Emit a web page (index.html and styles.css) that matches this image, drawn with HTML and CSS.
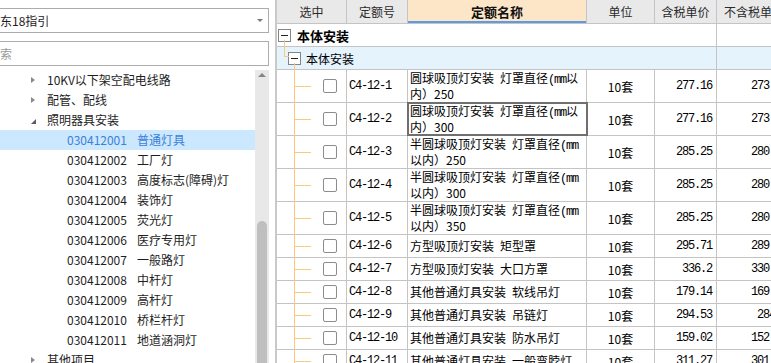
FILE: index.html
```html
<!DOCTYPE html>
<html lang="zh-CN">
<head>
  <meta charset="UTF-8">
  <title>定额库</title>
  <link rel="stylesheet" href="styles.css">
</head>
<body>
  <div class="app">
    <aside class="side">
      <div class="combo"><span class="combo-text">广东18指引</span><span class="combo-arrow"></span></div>
      <div class="search"><span class="placeholder">搜索</span></div>
      <div class="tree-wrap">
        <ul class="tree">
          <li class="l1"><i class="tw closed"></i>10KV以下架空配电线路</li>
          <li class="l1"><i class="tw closed"></i>配管、配线</li>
          <li class="l1"><i class="tw open"></i>照明器具安装</li>
          <li class="l2 sel"><span class="code">030412001</span>普通灯具</li>
          <li class="l2"><span class="code">030412002</span>工厂灯</li>
          <li class="l2"><span class="code">030412003</span>高度标志(障碍)灯</li>
          <li class="l2"><span class="code">030412004</span>装饰灯</li>
          <li class="l2"><span class="code">030412005</span>荧光灯</li>
          <li class="l2"><span class="code">030412006</span>医疗专用灯</li>
          <li class="l2"><span class="code">030412007</span>一般路灯</li>
          <li class="l2"><span class="code">030412008</span>中杆灯</li>
          <li class="l2"><span class="code">030412009</span>高杆灯</li>
          <li class="l2"><span class="code">030412010</span>桥栏杆灯</li>
          <li class="l2"><span class="code">030412011</span>地道涵洞灯</li>
          <li class="l1"><i class="tw closed"></i>其他项目</li>
        </ul>
        <div class="vscroll"><span class="up"></span><span class="thumb"></span></div>
      </div>
    </aside>
    <div class="split"></div>
    <main class="grid">
      <div class="row head">
        <div class="c w1">选中</div>
        <div class="c w2">定额号</div>
        <div class="c w3 sorted">定额名称</div>
        <div class="c w4">单位</div>
        <div class="c w5">含税单价</div>
        <div class="c w6">不含税单价</div>
      </div>
      <div class="row group g1">
        <div class="c gcell"><span class="tbox"></span><b>本体安装</b></div>
        <div class="c w6"></div>
      </div>
      <div class="row group g2">
        <div class="c gcell"><span class="tbox"></span>本体安装</div>
        <div class="c w6"></div>
      </div>

      <div class="row tall">
        <div class="c w1 pick"><span class="chk"></span></div>
        <div class="c w2 mono">C4-12-1</div>
        <div class="c w3 name"><span>圆球吸顶灯安装&ensp;灯罩直径<span class="half">(mm</span>以<br>内）250</span></div>
        <div class="c w4 unit">10套</div>
        <div class="c w5 num">277.16</div>
        <div class="c w6 num">273.08</div>
      </div>
      <div class="row tall">
        <div class="c w1 pick"><span class="chk"></span></div>
        <div class="c w2 mono">C4-12-2</div>
        <div class="c w3 name current"><span>圆球吸顶灯安装&ensp;灯罩直径<span class="half">(mm</span>以<br>内）300</span></div>
        <div class="c w4 unit">10套</div>
        <div class="c w5 num">277.16</div>
        <div class="c w6 num">273.08</div>
      </div>
      <div class="row tall">
        <div class="c w1 pick"><span class="chk"></span></div>
        <div class="c w2 mono">C4-12-3</div>
        <div class="c w3 name"><span>半圆球吸顶灯安装&ensp;灯罩直径<span class="half">(mm</span><br>以内）250</span></div>
        <div class="c w4 unit">10套</div>
        <div class="c w5 num">285.25</div>
        <div class="c w6 num">280.53</div>
      </div>
      <div class="row tall">
        <div class="c w1 pick"><span class="chk"></span></div>
        <div class="c w2 mono">C4-12-4</div>
        <div class="c w3 name"><span>半圆球吸顶灯安装&ensp;灯罩直径<span class="half">(mm</span><br>以内）300</span></div>
        <div class="c w4 unit">10套</div>
        <div class="c w5 num">285.25</div>
        <div class="c w6 num">280.53</div>
      </div>
      <div class="row tall">
        <div class="c w1 pick"><span class="chk"></span></div>
        <div class="c w2 mono">C4-12-5</div>
        <div class="c w3 name"><span>半圆球吸顶灯安装&ensp;灯罩直径<span class="half">(mm</span><br>以内）350</span></div>
        <div class="c w4 unit">10套</div>
        <div class="c w5 num">285.25</div>
        <div class="c w6 num">280.53</div>
      </div>
      <div class="row">
        <div class="c w1 pick"><span class="chk"></span></div>
        <div class="c w2 mono">C4-12-6</div>
        <div class="c w3 name"><span>方型吸顶灯安装&ensp;矩型罩</span></div>
        <div class="c w4 unit">10套</div>
        <div class="c w5 num">295.71</div>
        <div class="c w6 num">289.62</div>
      </div>
      <div class="row">
        <div class="c w1 pick"><span class="chk"></span></div>
        <div class="c w2 mono">C4-12-7</div>
        <div class="c w3 name"><span>方型吸顶灯安装&ensp;大口方罩</span></div>
        <div class="c w4 unit">10套</div>
        <div class="c w5 num">336.2</div>
        <div class="c w6 num">330.11</div>
      </div>
      <div class="row">
        <div class="c w1 pick"><span class="chk"></span></div>
        <div class="c w2 mono">C4-12-8</div>
        <div class="c w3 name"><span>其他普通灯具安装&ensp;软线吊灯</span></div>
        <div class="c w4 unit">10套</div>
        <div class="c w5 num">179.14</div>
        <div class="c w6 num">169.87</div>
      </div>
      <div class="row">
        <div class="c w1 pick"><span class="chk"></span></div>
        <div class="c w2 mono">C4-12-9</div>
        <div class="c w3 name"><span>其他普通灯具安装&ensp;吊链灯</span></div>
        <div class="c w4 unit">10套</div>
        <div class="c w5 num">294.53</div>
        <div class="c w6 num">284.6</div>
      </div>
      <div class="row">
        <div class="c w1 pick"><span class="chk"></span></div>
        <div class="c w2 mono">C4-12-10</div>
        <div class="c w3 name"><span>其他普通灯具安装&ensp;防水吊灯</span></div>
        <div class="c w4 unit">10套</div>
        <div class="c w5 num">159.02</div>
        <div class="c w6 num">152.49</div>
      </div>
      <div class="row">
        <div class="c w1 pick"><span class="chk"></span></div>
        <div class="c w2 mono">C4-12-11</div>
        <div class="c w3 name"><span>其他普通灯具安装&ensp;一般弯脖灯</span></div>
        <div class="c w4 unit">10套</div>
        <div class="c w5 num">311.27</div>
        <div class="c w6 num">301.96</div>
      </div>
    </main>
  </div>
</body>
</html>
```

FILE: styles.css
```css
body { margin: 0; width: 771px; height: 363px; overflow: hidden; background: #fff; color: #1e1e1e; font-family: "Noto Sans CJK SC", sans-serif; font-size: 12px; }
.app { display: flex; height: 363px; }

/* left panel */
.side { width: 275px; flex: none; overflow: hidden; }
.combo, .search { box-sizing: border-box; width: 283px; height: 25px; margin: 8px 0 0 -14px; padding-left: 1px; border: 1px solid #acacac; display: flex; align-items: center; white-space: nowrap; }
.combo-text { flex: 1; }
.combo-arrow { width: 0; height: 0; margin-right: 5px; border-top: 3px solid #7a7a7a; border-left: 3px solid transparent; border-right: 3px solid transparent; }
.search { color: #9a9a9a; }
.tree-wrap { display: flex; height: 293px; margin-top: 4px; }
.tree { width: 255px; flex: none; list-style: none; margin: 0; padding: 0; }
.tree li { height: 20px; line-height: 20px; display: flex; align-items: center; white-space: nowrap; }
.tree .l1 { padding-left: 31px; }
.tree .l2 { padding-left: 67px; }
.tree .code { margin-right: 10px; }
.tree .sel { background: #cce8ff; color: #3b7fd8; }
.tw { width: 16px; flex: none; display: flex; align-items: center; }
.tw::before { content: ""; width: 0; height: 0; }
.tw.closed::before { border-left: 4px solid #8a8a8a; border-top: 3.5px solid transparent; border-bottom: 3.5px solid transparent; }
.tw.open::before { border-right: 5px solid #5c5c5c; border-top: 5px solid transparent; margin-top: 2px; }
.vscroll { width: 14px; flex: none; background: #e8e8e8; display: flex; flex-direction: column; align-items: center; }
.vscroll .up { width: 0; height: 0; margin-top: 3px; border-bottom: 4px solid #858585; border-left: 4.5px solid transparent; border-right: 4.5px solid transparent; }
.vscroll .thumb { width: 10px; height: 200px; margin-top: 144px; background: #bfbfbf; border-radius: 5px 5px 0 0; }
.split { width: 2px; flex: none; background: #c9c9c9; }

/* right grid */
.grid { flex: 1; min-width: 0; overflow: hidden; color: #000; }
.row { display: flex; box-sizing: border-box; height: 23px; width: 515px; border-bottom: 1px solid #c4c4c4; }
.row.tall { height: 33px; }
.c { box-sizing: border-box; flex: none; border-right: 1px solid #c4c4c4; display: flex; align-items: center; white-space: nowrap; }
.w1 { width: 70px; }
.w2 { width: 61px; }
.w3 { width: 179px; }
.w4 { width: 68px; }
.w5 { width: 62px; }
.w6 { width: 75px; }

.head { height: 24px; background: #e9e9e9; color: #2a2a2a; }
.head .c { justify-content: center; }
.head .sorted { background: #fde6c8; font-weight: bold; font-size: 13px; color: #111; box-shadow: inset 0 -2px 0 #5c9ce4; }

.group .gcell { width: 440px; position: relative; }
.g1 { background: #fff; }
.g1 b { margin-left: 6px; font-size: 13px; }
.g2 { background: #e5f3fd; }
.g1 .tbox { margin-left: 1px; }
.g2 .tbox { margin-left: 11px; margin-right: 5px; }
.tbox { box-sizing: border-box; width: 13px; height: 13px; border: 1px solid #858585; background: #fff; display: flex; align-items: center; justify-content: center; }
.tbox::before { content: ""; width: 7px; height: 1px; background: #222; }
.g1 .gcell::after { content: ""; position: absolute; left: 7px; top: 16px; bottom: -1px; width: 1px; background: #fec77b; }
.g2 .gcell::before { content: ""; position: absolute; left: 7px; top: -1px; width: 4px; height: 10px; border-left: 1px solid #fec77b; border-bottom: 1px solid #fec77b; }
.g2 .gcell::after { content: ""; position: absolute; left: 17px; top: 16px; bottom: -1px; width: 1px; background: #fec77b; }

.pick { position: relative; }
.pick::before { content: ""; position: absolute; left: 17px; top: -1px; bottom: -1px; width: 1px; background: #fec77b; }
.pick::after { content: ""; position: absolute; left: 17px; top: 50%; width: 17px; height: 1px; background: #fec77b; }
.chk { box-sizing: border-box; width: 14px; height: 14px; margin-left: 46px; border: 1px solid #8c8c8c; border-radius: 2px; background: #fff; }

.mono, .num { font-family: "Liberation Mono", monospace; font-size: 12px; letter-spacing: -1.2px; }
.mono { padding-left: 2px; }
.name { padding-left: 2px; line-height: 14px; }
.name .half { font-family: "Liberation Mono", monospace; font-size: 12px; letter-spacing: -1.2px; }
.current { outline: 2px solid #6f6f6f; outline-offset: -1px; }
.unit { justify-content: center; }
.num { justify-content: flex-end; padding-right: 4px; }
```
